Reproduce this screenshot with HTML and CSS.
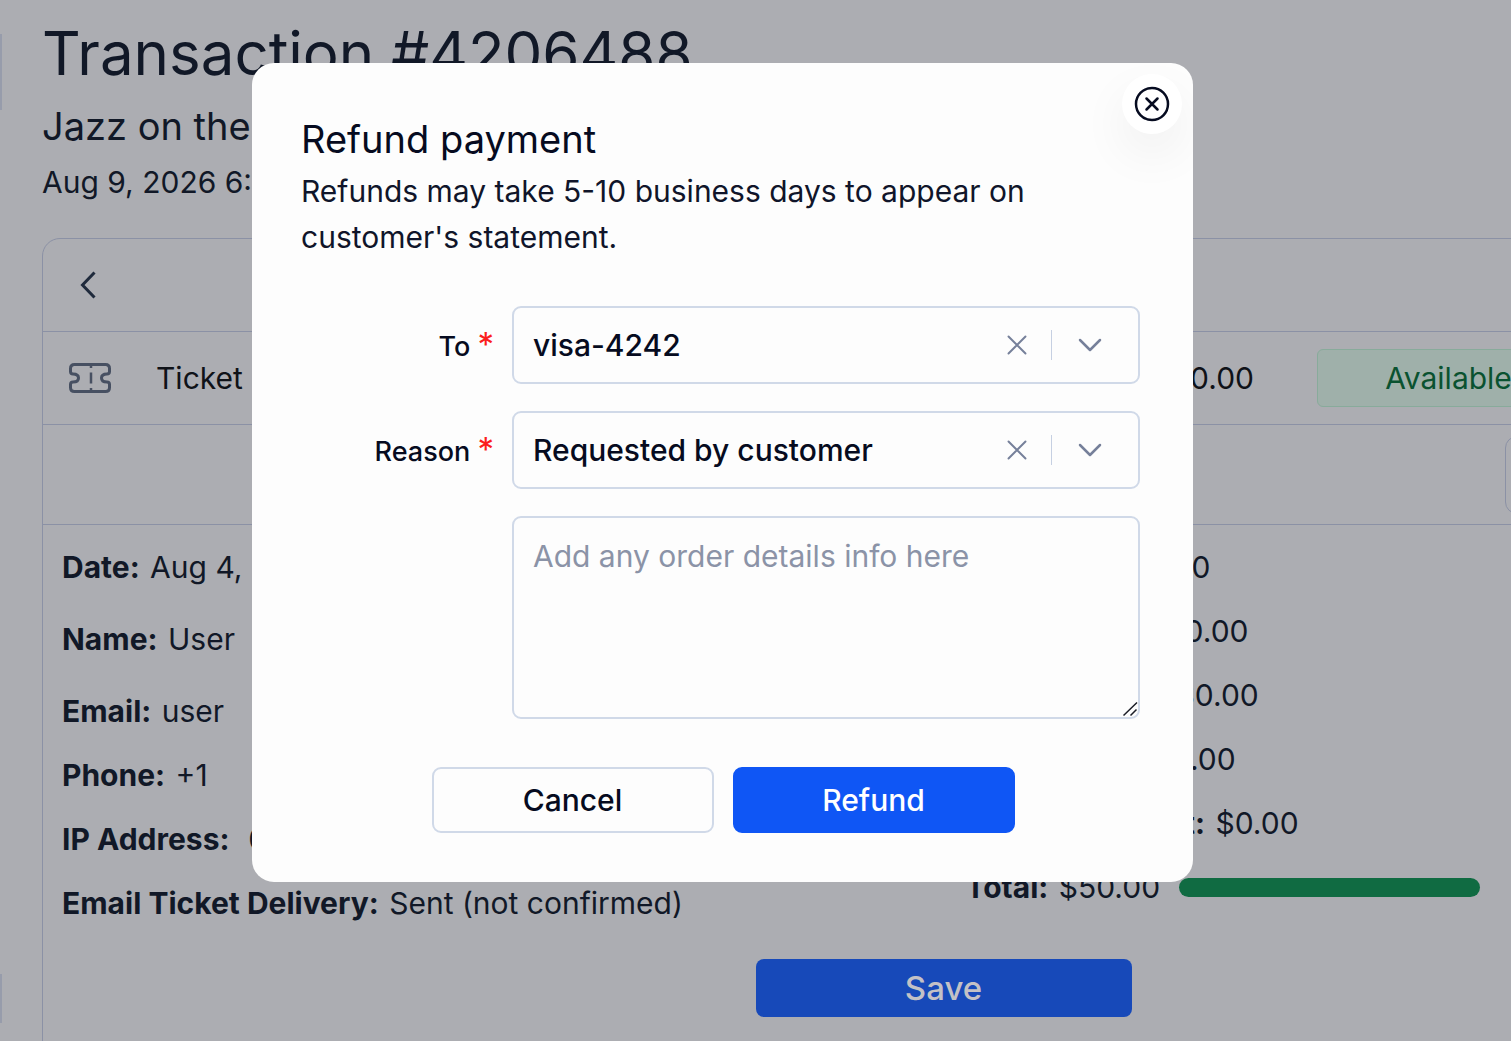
FILE: index.html
```html
<!DOCTYPE html>
<html lang="en">
<head>
<meta charset="utf-8">
<meta name="viewport" content="width=device-width, initial-scale=1">
<title>Transaction #4206488</title>
<link rel="stylesheet" href="styles.css">
</head>
<body>
<div class="page">
  <div class="rail" aria-hidden="true">
    <span class="rail-tab rail-tab-tall"></span>
    <span class="rail-tab"></span>
  </div>
  <main class="main">
    <header class="heading">
      <h1 class="title">Transaction #4206488</h1>
      <p class="event">Jazz on the</p>
      <p class="when">Aug 9, 2026 6:</p>
    </header>
    <section class="card">
      <div class="row row-nav">
        <button class="icon-button" type="button" aria-label="Back">
          <svg width="16" height="28" viewBox="0 0 16 28" fill="none" stroke="currentColor" stroke-width="3"><path d="M14.500 1.500 2.500 14l12 12.500"/></svg>
        </button>
      </div>
      <div class="row row-ticket">
        <svg class="ticket-icon" width="42" height="30" viewBox="0 0 42 30" fill="none" stroke="currentColor" stroke-width="3" stroke-linejoin="round"><path d="M5.500 1.500h31q4 0 4 4v3q0 2.500-2.500 2.500-5.500 0-5.500 4t5.500 4q2.500 0 2.500 2.500v3q0 4-4 4h-31q-4 0-4-4v-3q0-2.500 2.500-2.500 5.500 0 5.500-4T4 11q-2.500 0-2.500-2.500v-3q0-4 4-4Z"/><path d="M22 2v3M22 9.500v11M22 25v3" stroke-width="2.500"/></svg>
        <span class="ticket-name">Ticket</span>
        <span class="ticket-price">$50.00</span>
        <span class="badge">Available</span>
      </div>
      <div class="row row-actions">
        <button class="outline-button" type="button" aria-label="Add item"></button>
      </div>
      <div class="details">
        <dl class="list">
          <div class="item"><dt>Date:</dt> <dd>Aug 4,</dd></div>
          <div class="item item-tall"><dt>Name:</dt> <dd>User</dd></div>
          <div class="item"><dt>Email:</dt> <dd>user</dd></div>
          <div class="item"><dt>Phone:</dt> <dd>+1</dd></div>
          <div class="item"><dt>IP Address:</dt> <dd>&nbsp;0</dd></div>
          <div class="item"><dt>Email Ticket Delivery:</dt> <dd>Sent (not confirmed)</dd></div>
        </dl>
        <dl class="list">
          <div class="item"><dt>Subtotal:</dt> <dd>$50.00</dd></div>
          <div class="item"><dt>Booking Fee:</dt> <dd>$0.00</dd></div>
          <div class="item"><dt>Shipping Fee:</dt> <dd>$0.00</dd></div>
          <div class="item"><dt>Total Taxes:</dt> <dd>$0.00</dd></div>
          <div class="item"><dt>Ticket Discount:</dt> <dd>$0.00</dd></div>
          <div class="item item-total"><span><dt>Total:</dt> <dd>$50.00</dd></span><span class="bar"></span></div>
        </dl>
      </div>
      <div class="save-row"><button class="save" type="button">Save</button></div>
    </section>
  </main>
</div>

<div class="overlay">
  <form class="modal" role="dialog" aria-modal="true" aria-labelledby="refund-title">
    <button class="close" type="button" aria-label="Close">
      <svg width="36" height="36" viewBox="0 0 36 36" fill="none" stroke="currentColor" stroke-width="2.500" stroke-linecap="round"><circle cx="18" cy="18" r="16"/><path d="m12.500 12.500 11 11M23.500 12.500l-11 11"/></svg>
    </button>
    <h2 class="modal-title" id="refund-title">Refund payment</h2>
    <p class="modal-text">Refunds may take 5-10 business days to appear on customer's statement.</p>
    <div class="fields">
      <label class="label" for="to">To <span class="required">*</span></label>
      <div class="select">
        <select class="select-input" id="to" required><option>visa-4242</option></select>
        <button class="clear" type="button" aria-label="Clear destination"><svg width="20" height="20" viewBox="0 0 20 20" fill="none" stroke="currentColor" stroke-width="2" stroke-linecap="round"><path d="m1.500 1.500 17 17M18.500 1.500l-17 17"/></svg></button>
        <span class="divider"></span>
        <svg class="chevron" width="24" height="14" viewBox="0 0 24 14" fill="none" stroke="currentColor" stroke-width="2.500" stroke-linecap="round" stroke-linejoin="round"><path d="M2 2l10 10L22 2"/></svg>
      </div>
      <label class="label" for="reason">Reason <span class="required">*</span></label>
      <div class="select">
        <select class="select-input" id="reason" required><option>Requested by customer</option></select>
        <button class="clear" type="button" aria-label="Clear reason"><svg width="20" height="20" viewBox="0 0 20 20" fill="none" stroke="currentColor" stroke-width="2" stroke-linecap="round"><path d="m1.500 1.500 17 17M18.500 1.500l-17 17"/></svg></button>
        <span class="divider"></span>
        <svg class="chevron" width="24" height="14" viewBox="0 0 24 14" fill="none" stroke="currentColor" stroke-width="2.500" stroke-linecap="round" stroke-linejoin="round"><path d="M2 2l10 10L22 2"/></svg>
      </div>
      <div class="note">
        <textarea class="note-input" aria-label="Order details" placeholder="Add any order details info here"></textarea>
        <svg class="grip" width="16" height="16" viewBox="0 0 16 16" fill="none" stroke="currentColor" stroke-width="1.500"><path d="M1.500 14.500 15 1.500M8.500 14.500l6-6"/></svg>
      </div>
    </div>
    <div class="actions">
      <button class="button" type="button">Cancel</button>
      <button class="button button-primary" type="submit">Refund</button>
    </div>
  </form>
</div>
</body>
</html>
```
FILE: styles.css
```css
* { box-sizing: border-box; }

body {
  margin: 0;
  height: 100vh;
  overflow: hidden;
  background: #acadb2;
  color: #111827;
  font: 400 30px/48px Inter, "Liberation Sans", sans-serif;
}

h1, h2, p, dl, dt, dd { margin: 0; font-weight: 400; }

button, select, textarea { font: inherit; color: inherit; }

button { padding: 0; border: 0; background: none; cursor: pointer; }

svg { display: block; }

.page { display: flex; min-height: 100vh; overflow: hidden; }

.rail {
  flex: none;
  width: 42px;
  padding-top: 34px;
  display: flex;
  flex-direction: column;
  gap: 864px;
}

.rail-tab { width: 2px; height: 49px; background: #979cab; }
.rail-tab-tall { height: 76px; }

.main { flex: none; width: calc(100% + 292px); }

.heading { padding: 13px 0 30px; }

.title { margin-bottom: 3px; font-size: 60px; line-height: 80px; }
.event { font-size: 38px; line-height: 60px; }
.when { line-height: 52px; }

.card {
  border: 1px solid #8b91a5;
  border-radius: 18px;
  padding-bottom: 48px;
}

.row {
  display: flex;
  align-items: center;
  height: 93px;
  border-bottom: 1px solid #8b91a5;
}

.row-nav { padding-left: 37px; }
.icon-button { color: #1f2a3c; }

.row-ticket { padding: 0 264px 0 26px; color: #0f1218; }
.ticket-icon { margin-right: 45px; color: #475062; }
.ticket-name { flex: 1; }

.badge {
  width: 263px;
  height: 58px;
  margin-left: 63px;
  border: 1px solid #88ab9b;
  border-radius: 6px;
  background: #9fb0aa;
  color: #0a5230;
  line-height: 56px;
  text-align: center;
}

.row-actions { justify-content: flex-end; height: 100px; padding-right: 20px; }

.outline-button {
  width: 319px;
  height: 78px;
  border: 1px solid #8b91a5;
  border-radius: 12px;
}

.details {
  display: grid;
  grid-template-columns: 1fr 1fr;
  column-gap: 44px;
  padding: 10px 19px 24px;
}

.item { height: 64px; line-height: 64px; }
.item-tall { height: 80px; line-height: 80px; }
.item dt, .item dd { display: inline; }
.item dt { font-weight: 700; }
.item dd { margin-left: 2px; }

.item-total { display: flex; align-items: center; gap: 19px; }
.bar { width: 301px; height: 19px; border-radius: 10px; background: #106b42; }

.save-row { display: flex; justify-content: center; }

.save {
  width: 376px;
  height: 58px;
  border-radius: 8px;
  background: #1749b9;
  color: #c3c1c6;
  font-size: 33px;
  font-weight: 500;
}

.overlay {
  position: fixed;
  inset: 0;
  display: flex;
  justify-content: center;
  align-items: flex-start;
  padding: 63px 66px 0 0;
  overflow: auto;
}

.modal {
  position: relative;
  width: 941px;
  padding: 48px 53px 49px 49px;
  border-radius: 22px;
  background: #fdfdfd;
  color: #060b20;
  overflow: hidden;
}

.modal-title { margin-bottom: 1px; font-size: 38px; line-height: 56px; }
.modal-text { line-height: 46px; color: #10152a; }

.close {
  position: absolute;
  top: 11px;
  right: 11px;
  display: grid;
  place-items: center;
  width: 60px;
  height: 60px;
  border-radius: 50%;
  background: #fff;
  box-shadow: 0 20px 50px rgba(0, 0, 0, .06);
}

.fields {
  display: grid;
  grid-template-columns: 193px 1fr;
  gap: 27px 18px;
  align-items: center;
  margin-top: 46px;
}

.label { padding-top: 4px; font-size: 27px; font-weight: 500; text-align: right; }
.required { color: #fb1d1d; font-size: 33px; font-weight: 400; line-height: 1; }

.select {
  display: grid;
  grid-template-columns: 1fr 20px 1px 28px;
  column-gap: 24px;
  align-items: center;
  height: 78px;
  padding-right: 34px;
  border: 2px solid #d0d9e8;
  border-radius: 9px;
  color: #76809a;
}

.select-input {
  grid-area: 1 / 1 / 2 / -1;
  height: 74px;
  padding: 0 0 0 19px;
  border: 0;
  outline: 0;
  appearance: none;
  background: none;
  color: #060b20;
  font-weight: 500;
}

.clear { grid-area: 1 / 2; }
.divider { grid-area: 1 / 3; height: 30px; background: #c6d0e2; }
.chevron { grid-area: 1 / 4; justify-self: center; pointer-events: none; }

.note { grid-column: 2; position: relative; }

.note-input {
  display: block;
  width: 100%;
  height: 203px;
  padding: 14px 19px;
  border: 2px solid #d0d9e8;
  border-radius: 9px;
  outline: 0;
  background: none;
  resize: none;
}

.note-input::placeholder { color: #8b93a7; opacity: 1; }

.grip { position: absolute; right: 2px; bottom: 2px; color: #1b1d26; }

.actions {
  display: flex;
  justify-content: center;
  gap: 19px;
  margin-top: 48px;
  padding-left: 5px;
}

.button {
  width: 282px;
  height: 66px;
  border: 2px solid #d0d9e8;
  border-radius: 9px;
  font-weight: 500;
}

.button-primary { border-color: #0f56f5; background: #0f56f5; color: #fff; }
```
